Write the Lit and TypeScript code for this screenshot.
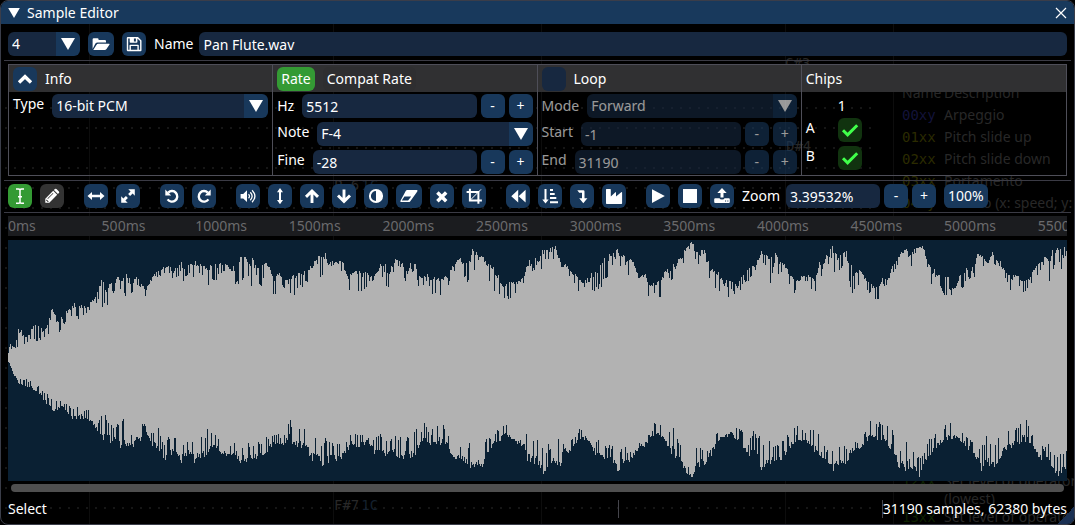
import { LitElement, html, css, svg } from "lit";
import { customElement, state } from "lit/decorators.js";

/* Envelope keyframes: [position, crest, notch]. Positions use SX units per column, levels use SY units per pixel. */
const SX = 2.904;
const SY = 3;
const SPLIT = 1553.5;
type Key = [number, number, number];
const shift = (keys: Key[]): Key[] => keys.map(([x, a, b]) => [x + SPLIT, a, b]);

const UPPER: Key[] = [
  [24, 350, 370], [27, 325, 345], [40, 335, 345], [53, 273, 330], [75, 300, 330], [95, 272, 310], [110, 265, 320], [125, 285, 310],
  [150, 215, 310], [170, 250, 297], [190, 222, 262], [217, 200, 250], [230, 205, 258], [250, 212, 237], [270, 190, 212],
  [284, 165, 200], [293, 125, 215], [305, 150, 222], [320, 140, 185], [343, 122, 160], [360, 107, 190], [375, 125, 192], [400, 125, 150],
  [422, 165, 183], [440, 125, 150], [460, 105, 125], [485, 90, 110], [505, 100, 140], [523, 68, 115], [530, 85, 140], [545, 85, 115],
  [563, 73, 135], [583, 83, 120], [605, 85, 148], [630, 85, 130], [655, 80, 110], [670, 98, 150], [692, 58, 158], [710, 63, 120],
  [730, 58, 158], [745, 95, 115], [753, 78, 172], [775, 80, 110], [795, 125, 190], [810, 112, 135], [835, 135, 178], [860, 107, 178],
  [880, 110, 150], [900, 88, 130], [925, 58, 140], [942, 50, 105], [955, 80, 135], [975, 72, 100], [992, 75, 115], [1015, 115, 182],
  [1030, 95, 160], [1050, 108, 183], [1070, 112, 140], [1085, 125, 180], [1105, 82, 105], [1115, 80, 165], [1130, 105, 160],
  [1148, 68, 85], [1165, 80, 105], [1180, 105, 150], [1193, 77, 110], [1205, 85, 125], [1218, 115, 168], [1238, 115, 135],
  [1250, 130, 173], [1275, 115, 180], [1295, 120, 172], [1310, 95, 120], [1332, 62, 92], [1345, 75, 120], [1358, 70, 160],
  [1367, 42, 60], [1383, 42, 135], [1400, 65, 80], [1410, 68, 118], [1430, 95, 160], [1447, 100, 187], [1465, 150, 190],
  [1480, 135, 200], [1500, 130, 175], [1515, 130, 165], [1530, 88, 120], [1537, 72, 115], [1545, 90, 150],
  ...shift([
    [0, 65, 90], [10, 78, 95], [20, 40, 110], [30, 42, 70], [43, 36, 75], [62, 32, 90], [75, 85, 135], [95, 88, 118], [110, 110, 140],
    [120, 105, 175], [140, 135, 210], [150, 125, 195], [170, 105, 165], [185, 98, 163], [195, 70, 150], [210, 60, 140], [230, 42, 65],
    [240, 42, 118], [260, 60, 80], [265, 65, 140], [280, 65, 95], [300, 120, 150], [320, 115, 150], [328, 150, 187], [345, 140, 180],
    [362, 128, 190], [378, 105, 135], [405, 82, 142], [425, 60, 100], [437, 38, 60], [452, 15, 40], [458, 20, 95], [470, 50, 75],
    [488, 35, 135], [500, 70, 110], [515, 100, 162], [530, 105, 160], [545, 140, 185], [553, 135, 212], [570, 135, 160],
    [587, 145, 198], [605, 105, 140], [620, 88, 135], [640, 85, 110], [657, 47, 75], [675, 45, 100], [683, 62, 145], [695, 50, 80],
    [705, 68, 115], [725, 85, 115], [740, 115, 155], [748, 125, 178], [765, 125, 160], [790, 118, 140], [812, 130, 182],
    [825, 80, 110], [833, 90, 145], [845, 60, 80], [865, 28, 130], [880, 55, 130], [903, 38, 60], [907, 60, 147], [925, 110, 182],
    [945, 100, 130], [960, 130, 155], [978, 145, 190], [997, 140, 192], [1010, 125, 150], [1025, 130, 160], [1040, 85, 115],
    [1058, 55, 80], [1075, 35, 110], [1090, 50, 100], [1110, 35, 65], [1125, 27, 60], [1140, 80, 105], [1150, 100, 160],
    [1158, 90, 185], [1170, 115, 140], [1187, 120, 195], [1200, 125, 160], [1215, 155, 195], [1228, 130, 155], [1243, 95, 175],
    [1255, 98, 120], [1272, 95, 155], [1285, 48, 75], [1300, 62, 90], [1315, 82, 115], [1328, 47, 80], [1348, 70, 130],
    [1365, 100, 130], [1380, 120, 165], [1400, 120, 150], [1418, 140, 182], [1440, 115, 150], [1460, 80, 115], [1475, 70, 95],
    [1495, 38, 145], [1515, 32, 75], [1525, 35, 80], [1532, 55, 145], [1537, 30, 50], [1546, 28, 115],
  ]),
];

const LOWER: Key[] = [
  [24, -130, -133], [30, -105, -115], [55, -60, -80], [90, -50, -75], [115, -30, -55], [150, 25, -20], [180, 5, -10], [215, 50, 5],
  [235, 40, 5], [262, 50, 20], [285, 85, 50], [293, 125, 22], [303, 100, 15], [312, 120, 35], [330, 105, 65], [345, 137, 50],
  [362, 130, 30], [380, 130, 90], [400, 118, 50], [420, 90, 55], [440, 125, 75], [460, 135, 70], [475, 165, 120], [495, 165, 75],
  [510, 150, 100], [525, 185, 82], [535, 160, 120], [553, 155, 90], [565, 178, 110], [585, 165, 88], [610, 158, 65], [625, 125, 85],
  [640, 155, 115], [665, 150, 120], [683, 155, 98], [695, 175, 140], [712, 175, 100], [730, 165, 130], [742, 165, 100],
  [760, 150, 115], [775, 150, 90], [800, 115, 82], [820, 125, 95], [840, 100, 42], [850, 120, 65], [870, 135, 62], [885, 130, 75],
  [905, 180, 88], [920, 160, 105], [930, 180, 110], [945, 187, 88], [960, 165, 115], [980, 178, 110], [1000, 150, 110],
  [1020, 125, 78], [1045, 130, 85], [1067, 110, 65], [1085, 150, 98], [1103, 140, 85], [1120, 165, 105], [1140, 145, 98],
  [1160, 180, 95], [1180, 160, 95], [1203, 165, 75], [1220, 125, 80], [1232, 105, 55], [1250, 130, 85], [1260, 120, 55],
  [1280, 120, 50], [1300, 130, 80], [1315, 160, 150], [1335, 165, 115], [1355, 178, 115], [1370, 197, 115], [1385, 190, 130],
  [1402, 190, 110], [1420, 135, 95], [1450, 110, 70], [1467, 92, 52], [1485, 115, 70], [1505, 120, 80], [1520, 130, 62],
  [1530, 170, 75], [1548, 178, 105],
  ...shift([
    [5, 175, 105], [25, 218, 135], [42, 210, 115], [55, 175, 130], [70, 200, 95], [85, 135, 115], [97, 155, 110], [115, 125, 95],
    [135, 105, 62], [155, 110, 72], [172, 150, 98], [195, 160, 115], [215, 185, 115], [230, 180, 125], [240, 205, 150],
    [258, 175, 120], [275, 175, 145], [292, 145, 75], [300, 130, 115], [320, 125, 62], [342, 95, 40], [355, 90, 60], [378, 120, 55],
    [408, 165, 78], [425, 180, 120], [440, 210, 180], [457, 222, 195], [468, 180, 130], [480, 190, 113], [495, 180, 150],
    [510, 155, 92], [530, 115, 82], [545, 100, 55], [567, 95, 45], [585, 105, 70], [597, 120, 72], [618, 155, 115], [630, 150, 80],
    [640, 150, 85], [657, 210, 95], [668, 180, 110], [677, 205, 98], [690, 160, 125], [705, 195, 108], [722, 155, 98],
    [740, 130, 85], [755, 110, 57], [770, 120, 65], [785, 110, 82], [800, 125, 75], [818, 155, 80], [835, 165, 115], [855, 185, 145],
    [870, 205, 118], [890, 180, 120], [905, 180, 120], [920, 140, 100], [945, 130, 110], [975, 95, 38], [985, 100, 60],
    [1003, 110, 47], [1020, 120, 60], [1040, 160, 80], [1055, 190, 125], [1070, 200, 115], [1087, 205, 98], [1100, 185, 150],
    [1112, 225, 155], [1125, 195, 140], [1145, 170, 95], [1165, 130, 85], [1185, 110, 70], [1200, 105, 50], [1222, 100, 62],
    [1240, 120, 70], [1262, 140, 98], [1280, 165, 120], [1295, 200, 130], [1312, 180, 90], [1330, 195, 115], [1347, 165, 98],
    [1367, 140, 82], [1395, 125, 62], [1425, 110, 32], [1440, 125, 85], [1460, 160, 115], [1480, 175, 130], [1488, 160, 110],
    [1502, 205, 150], [1522, 215, 150], [1537, 210, 125], [1546, 180, 150],
  ]),
];

const COLUMNS = 1059;
const WAVE_H = 241;

function noise(n: number): number {
  let h = Math.imul(n + 11, 0x9e3779b1);
  h = Math.imul(h ^ (h >>> 15), 0x85ebca6b);
  h = Math.imul(h ^ (h >>> 13), 0xc2b2ae35);
  return ((h ^ (h >>> 16)) >>> 0) / 4294967296;
}

function edge(keys: Key[], seed: number, origin: number): number[] {
  const out: number[] = [];
  let k = 0;
  for (let c = 0; c < COLUMNS; c++) {
    const u = (c + 8) * SX;
    while (k < keys.length - 2 && keys[k + 1][0] < u) k++;
    const [x0, a0, b0] = keys[k];
    const [x1, a1, b1] = keys[k + 1];
    const t = Math.min(1, Math.max(0, (u - x0) / (x1 - x0)));
    const crest = a0 + (a1 - a0) * t;
    const notch = b0 + (b1 - b0) * t;
    const r = noise(c * 2 + seed);
    const v = noise(c * 2 + seed + 1);
    const mix = r < 0.27 ? 0.75 + v * 0.3 : v * 0.4;
    out.push(Math.round((crest + (notch - crest) * mix) / SY + origin));
  }
  return out;
}

function wavePath(): string {
  const top = edge(UPPER, 3, -5);
  const bottom = edge(LOWER, 5003, 165);
  let d = `M0 ${top[0]}`;
  top.forEach((y, x) => (d += `V${y}H${x + 1}`));
  for (let x = COLUMNS - 1; x >= 0; x--) d += `V${bottom[x]}H${x}`;
  return d + "Z";
}
const WAVE = wavePath();

const ICONS: Record<string, unknown> = {
  open: svg`<path d="M3.6 17V7.4q0-1.2 1.2-1.2h3.6q1.2 0 1.2 1.2v.5h6.2q1.2 0 1.2 1.2v1.3H8.6q-1.4 0-2.2 1z"/><path d="M4.4 17.8l3-4.900q.7-1.200 2-1.200h10.600q1 0 .5.900l-3 4.500q-.7 1-1.900 1H5q-1 0-.6-.3z"/>`,
  save: svg`<path fill-rule="evenodd" d="M5.800 5h10.200l3.500 3.500v9.700q0 1-1 1H5.800q-1 0-1-1V6q0-1 1-1zM6.200 6.400v11.400h1.300v-4.300q0-.8.8-.8h7.700q.8 0 .8.800v4.300h1.300V9.100l-2.700-2.700v3.500q0 .8-.8.800H8.500q-.8 0-.8-.8V6.400zM8.900 14v3.800h6.500V14zM11.900 6.400v3h2V6.400z"/>`,
  up: svg`<path d="M6 15.500l6-5.800 6 5.800" fill="none" stroke="currentColor" stroke-width="3.400"/>`,
  ibeam: svg`<path d="M8 5h2.300q1.200 0 1.700 1 .5-1 1.700-1H16M8 19.300h2.300q1.200 0 1.700-1 .5 1 1.700 1H16M12 5.800v12.800M10 12.700h4" fill="none" stroke="currentColor" stroke-width="1.500"/>`,
  pencil: svg`<path fill-rule="evenodd" d="M5.300 18.700v-4l7.900-7.900 4 4-7.900 7.900zM6.600 15.600l-.3.400v1h1v1h.9l.5-.5zM13.900 6.100l1-1q.8-.8 1.600 0l2.400 2.400q.8.800 0 1.600l-1 1zM7.900 14.900l5.500-5.500-.5-.5-5.500 5.500z"/>`,
  horiz: svg`<path d="M3.500 12L8 8v2.800h8V8l4.500 4-4.500 4v-2.800H8V16z"/>`,
  diag: svg`<path d="M12.300 5.200h6.500v6.500l-2.200-2.200-2.500 2.500-2-2 2.500-2.500zM11.700 18.800H5.200v-6.500l2.200 2.200L9.900 12l2 2-2.500 2.500z"/>`,
  undo: svg`<path d="M8.200 8.600A5.300 5.300 0 1 1 7.600 15.400" fill="none" stroke="currentColor" stroke-width="2.400"/><path d="M5.300 5.500v5.900h5.900z"/>`,
  redo: svg`<path d="M15.800 8.600A5.300 5.300 0 1 0 16.400 15.400" fill="none" stroke="currentColor" stroke-width="2.400"/><path d="M18.700 5.500v5.900h-5.900z"/>`,
  volume: svg`<path d="M4.600 10h2.600L11 6.300v11.800l-3.800-3.700H4.600z"/><path d="M12.500 10.200q2 1.900 0 4M14.300 8.200q3.700 4 0 8M16.100 6.200q5.600 6 0 12" fill="none" stroke="currentColor" stroke-width="1.300"/>`,
  vert: svg`<path d="M12 4l3 4.200h-2v7.800h2L12 20.200 9 16h2V8.200H9z"/>`,
  arrowup: svg`<path d="M6 12.900l6-5.900 6 5.900M12 8v11" fill="none" stroke="currentColor" stroke-width="2.900"/>`,
  arrowdown: svg`<path d="M6 11.500l6 5.900 6-5.900M12 16.400V5.500" fill="none" stroke="currentColor" stroke-width="2.900"/>`,
  invert: svg`<circle cx="12" cy="12" r="6.100" fill="none" stroke="currentColor" stroke-width="2"/><path d="M12 6v12a6 6 0 0 0 0-12z"/>`,
  eraser: svg`<path fill-rule="evenodd" d="M10.300 6h9.200q1.600 0 .8 1.400l-7 9.800q-.6.900-1.700.9H4.300q-1.600 0-.8-1.400l5.200-9.800Q9.200 6 10.300 6zM7.400 12.500l-2.600 4h6.300l3.100-4z"/>`,
  cross: svg`<path d="M7.400 8.400l8.800 8.800M16.200 8.400l-8.800 8.800" fill="none" stroke="currentColor" stroke-width="3.500"/>`,
  crop: svg`<path d="M7.900 4.800v11.700h12M4.600 8h11.800v11.800" fill="none" stroke="currentColor" stroke-width="2"/><path d="M8 16.400L19 5.400" fill="none" stroke="currentColor" stroke-width="1"/>`,
  rewind: svg`<path d="M12.200 5.800v12.800L5.300 12.200zM19.600 5.800v12.800l-7-6.400z"/>`,
  sort: svg`<path d="M6.500 5h2v10.500h2.200L7.500 19.600l-3.200-4.100h2.200zM12 5h3v2h-3zM12 9h4.700v2H12zM12 13h6.300v2H12zM12 17.200h8v2h-8z"/>`,
  level: svg`<path d="M7.300 6.200h6q1.200 0 1.200 1.200v6.800h2.900l-4.100 5-4.100-5H12V8.700H9.200z"/>`,
  industry: svg`<path d="M4.600 5h3.600q.6 0 .6.600v7l4.600-4.300q.6-.5.600.3v3.900l5.200-4.300q.9-.6.900.4v10.700q0 .7-.7.700H4.700q-.7 0-.7-.7V5.600q0-.6.600-.6z"/>`,
  play: svg`<path d="M6 5.200v13.800L18.800 12z"/>`,
  stop: svg`<path d="M5 5h14v14H5z"/>`,
  upload: svg`<path d="M12 4l4.700 5h-3.200v4.400h-3V9H7.300z"/><path fill-rule="evenodd" d="M5.200 14.300h4.300q.3 1.200 2.500 1.200t2.500-1.200h4.300q1 0 1 1V18q0 1-1 1H5.200q-1 0-1-1v-2.700q0-1 1-1zM15 16.500v1.100h1.100v-1.100zM17.300 16.500v1.100h1.100v-1.100z"/>`,
  check: svg`<path d="M5 12.300l4.600 4.600L19.200 7.300" fill="none" stroke="currentColor" stroke-width="3"/>`,
};

const icon = (name: string) => html`<svg class="ico" viewBox="0 0 24 24" aria-hidden="true">${ICONS[name]}</svg>`;

const TOOLS: { icon: string; label: string; mode?: string; wide?: boolean }[][] = [
  [{ icon: "ibeam", label: "Select mode", mode: "on" }, { icon: "pencil", label: "Draw mode", mode: "off" }],
  [{ icon: "horiz", label: "Resize" }, { icon: "diag", label: "Resample" }],
  [{ icon: "undo", label: "Undo" }, { icon: "redo", label: "Redo" }],
  [
    { icon: "volume", label: "Amplify" }, { icon: "vert", label: "Normalize" }, { icon: "arrowup", label: "Fade in" },
    { icon: "arrowdown", label: "Fade out" }, { icon: "invert", label: "Invert" }, { icon: "eraser", label: "Silence", wide: true },
    { icon: "cross", label: "Delete" }, { icon: "crop", label: "Trim" },
  ],
  [
    { icon: "rewind", label: "Reverse" }, { icon: "sort", label: "Sort" }, { icon: "level", label: "Level" },
    { icon: "industry", label: "Filter" },
  ],
  [{ icon: "play", label: "Preview" }, { icon: "stop", label: "Stop" }, { icon: "upload", label: "Export" }],
];

const MARKS = Array.from({ length: 12 }, (_, i) => `${i * 500}ms`);

@customElement("app-root")
export class AppRoot extends LitElement {
  @state() private chips = [true, true];

  static styles = css`
    :host {
      display: block;
      background: #000;
      color: #fff;
      font: 14px/20px "Noto Sans", "Open Sans", sans-serif;
    }
    * { box-sizing: border-box; }
    .window {
      position: relative;
      display: flex;
      flex-direction: column;
      min-height: 100vh;
      border: 1px solid #3a3d49;
      border-radius: 8px;
      overflow: hidden;
      background: #000;
    }
    .title {
      display: flex;
      align-items: center;
      gap: 7px;
      height: 23px;
      padding: 0 7px;
      background: #18395c;
      z-index: 1;
    }
    .title h1 { flex: 1; margin: 0; font: inherit; }
    .tri { display: block; width: 12px; height: 10px; fill: currentColor; }
    button, input, select { font: inherit; color: inherit; border: 0; margin: 0; outline-offset: 1px; }
    .title button { display: flex; padding: 0; background: none; }
    .close { width: 12px; height: 12px; stroke: #fff; stroke-width: 1.2; }
    .content {
      position: relative;
      flex: 1;
      display: flex;
      flex-direction: column;
      gap: 4px;
      padding: 8px 7px 4px;
    }
    .row { display: flex; align-items: center; gap: 8px; }
    .rule { height: 1px; margin: 0 -4px -1px; border: 0; background: #3b3b45; flex: none; }
    input.text {
      flex: 1;
      min-width: 0;
      width: 0;
      height: 24px;
      padding: 0 4px;
      border-radius: 6px;
      background: #172840;
    }
    .combo { position: relative; display: flex; flex: 1; min-width: 0; height: 24px; }
    .combo select {
      appearance: none;
      width: 100%;
      padding: 0 28px 0 4px;
      border-radius: 6px;
      opacity: 1;
      background: linear-gradient(to left, #18385b 24px, #172840 24px);
    }
    .combo .tri { position: absolute; right: 5px; top: 6px; width: 14px; height: 12px; pointer-events: none; }
    .combo.small { flex: 0 0 72px; }
    .btn {
      display: flex;
      align-items: center;
      justify-content: center;
      flex: none;
      width: 24px;
      height: 24px;
      padding: 0;
      border-radius: 6px;
      background: #18385b;
    }
    .btn.wide { width: 26px; }
    .btn.fit { width: auto; padding: 0 4px; }
    .btn.on { background: #349a34; }
    .btn.off { background: #333; }
    .btn.flat { background: #2e2e30; }
    .ico { width: 24px; height: 24px; fill: currentColor; flex: none; }
    .props {
      display: grid;
      grid-template-columns: repeat(4, minmax(0, 1fr));
      border: 1px solid #4e4e58;
    }
    .col:not(:last-child) { border-right: 1px solid #4e4e58; }
    .head {
      display: flex;
      align-items: center;
      gap: 8px;
      height: 27px;
      padding: 0 4px;
      background: #303032;
    }
    .body { display: flex; flex-direction: column; align-items: stretch; gap: 4px; padding: 2px 4px 1px; }
    .field { display: flex; align-items: center; gap: 4px; height: 24px; }
    .field label { margin-right: 4px; }
    .field.up label { padding-bottom: 4px; }
    .dim { opacity: 0.6; }
    .tick {
      appearance: none;
      width: 24px;
      height: 24px;
      border-radius: 6px;
      background: #172840;
    }
    .chips { align-self: flex-start; border-collapse: collapse; margin: 0; }
    .chips th { font-weight: normal; text-align: left; padding: 0; }
    .chips tbody th { width: 32px; vertical-align: top; }
    .chips thead th { height: 24px; }
    .chips td { padding: 0; vertical-align: top; }
    .chips tbody tr:not(:last-child) td { padding-bottom: 4px; }
    .chips td label { display: grid; width: 24px; height: 24px; color: #40ff4a; }
    .chips td input, .chips td svg { grid-area: 1 / 1; }
    .chips td input { background: #11330f; }
    .chips td svg { visibility: hidden; pointer-events: none; }
    .chips td input:checked + svg { visibility: visible; }
    .tools { gap: 20px; }
    .group { display: flex; align-items: center; gap: 8px; }
    .zoom { display: flex; align-items: center; gap: 4px; margin-left: -12px; }
    .zoom label { margin-right: 2px; }
    .row > label { margin-right: -2px; }
    .zoom input.text { flex: 0 0 94px; }
    .zoom .fit { margin-left: 4px; }
    .ruler {
      display: flex;
      height: 20px;
      overflow: hidden;
      background: #1b1c1f;
      color: #6a6a6c;
      white-space: nowrap;
    }
    .ruler span { flex: 0 0 8.84%; width: 0; }
    .wave {
      flex: 1 1 0;
      min-height: 160px;
      width: 100%;
      display: block;
      background: #0a2033;
    }
    .scroll { height: 8px; margin: -1px 3px 0; border-radius: 4px; background: #4f4f4f; }
    .status { display: flex; height: 24px; align-items: center; padding-top: 2px; }
    .status span { flex: 611 0 0; min-height: 18px; line-height: 18px; }
    .status span + span { flex-grow: 263; border-left: 1px solid #45454c; }
    .status span:last-child { flex: 0 0 auto; border-left: 1px solid #45454c; white-space: nowrap; }
    .grip {
      position: absolute;
      right: 0;
      bottom: 0;
      width: 17px;
      height: 17px;
      background: linear-gradient(135deg, transparent 50%, #1a3053 50%);
    }
    .ghost { position: absolute; inset: 0; overflow: hidden; pointer-events: none; color: #282828; white-space: nowrap; }
    .dots {
      position: absolute;
      left: 0;
      top: 99px;
      width: 872px;
      bottom: 0;
      background: radial-gradient(circle at 5px 8px, #161616 1px, transparent 1px) 0 0 / 9px 20px;
    }
    .bar { position: absolute; top: 0; bottom: 0; width: 1px; background: #0d0d0d; }
    .b1 { left: 88px; } .b2 { left: 332px; } .b3 { left: 540px; } .b4 { left: 784px; } .b5 { left: 892px; }
    .note { position: absolute; font-family: "DejaVu Sans Mono", monospace; }
    .n1 { left: 784px; top: 52px; } .n2 { left: 785px; top: 135px; }
    .n3 { left: 333px; top: 174px; } .n4 { left: 333px; top: 494px; }
    .note i { font-style: normal; color: #14202e; margin-left: 2px; }
    .fx { position: absolute; left: 901px; display: grid; grid-template-columns: 42px auto; line-height: 22px; }
    .fx.a { top: 81px; } .fx.b { top: 471px; line-height: 18px; }
    .fx code { font: 14px "DejaVu Sans Mono", monospace; line-height: inherit; color: #2b2b00; }
    .fx code.v { color: #13133a; }
    .fx code.g { color: #0e2200; }
    .content > :not(.ghost) { position: relative; }
  `;

  private tri() {
    return html`<svg class="tri" viewBox="0 0 14 12" aria-hidden="true"><path d="M0 0h14L7 12z" /></svg>`;
  }

  private number(id: string, label: string, value: string, disabled = false, up = true) {
    return html`<div class="field ${up ? "up" : ""}">
      <label for=${id}>${label}</label>
      <input class="text" id=${id} type="text" .value=${value} ?disabled=${disabled} />
      <button class="btn" aria-label="Decrease ${label}" ?disabled=${disabled}>-</button>
      <button class="btn" aria-label="Increase ${label}" ?disabled=${disabled}>+</button>
    </div>`;
  }

  private choice(id: string, label: string, value: string, disabled = false, up = true) {
    return html`<div class="field ${up ? "up" : ""}">
      <label for=${id}>${label}</label>
      <span class="combo"><select id=${id} ?disabled=${disabled}><option>${value}</option></select>${this.tri()}</span>
    </div>`;
  }

  private toggle(i: number) {
    this.chips = this.chips.map((c, n) => (n === i ? !c : c));
  }

  render() {
    return html`<main class="window">
      <div class="ghost" aria-hidden="true">
        <div class="dots"></div>
        <div class="bar b1"></div><div class="bar b2"></div><div class="bar b3"></div><div class="bar b4"></div><div class="bar b5"></div>
        <span class="note n1">C#3</span><span class="note n2">D#4</span>
        <span class="note n3">P 6<i>1C</i></span><span class="note n4">F#7<i>1C</i></span>
        <div class="fx a">
          <span>Name</span><span>Description</span>
          <code class="v">00xy</code><span>Arpeggio</span>
          <code>01xx</code><span>Pitch slide up</span>
          <code>02xx</code><span>Pitch slide down</span>
          <code>03xx</code><span>Portamento</span>
          <code>04xy</code><span>Vibrato (x: speed; y: depth)</span>
        </div>
        <div class="fx b">
          <code class="g">12xx</code><span>Set level of operator 1</span>
          <span></span><span>(lowest)</span>
          <code class="g">13xx</code><span>Set level of operator 2</span>
        </div>
      </div>
      <header class="title">
        ${this.tri()}
        <h1>Sample Editor</h1>
        <button aria-label="Close"><svg class="close" viewBox="0 0 12 12"><path d="M1 1l10 10M11 1L1 11" /></svg></button>
      </header>
      <div class="content">
        <div class="row">
          <span class="combo small"><select aria-label="Sample"><option>4</option></select>${this.tri()}</span>
          <button class="btn wide" aria-label="Open">${icon("open")}</button>
          <button class="btn" aria-label="Save">${icon("save")}</button>
          <label for="name">Name</label>
          <input class="text" id="name" type="text" .value=${"Pan Flute.wav"} />
        </div>
        <hr class="rule" />
        <section class="props">
          <div class="col">
            <div class="head"><button class="btn" aria-label="Collapse">${icon("up")}</button>Info</div>
            <div class="body">${this.choice("type", "Type", "16-bit PCM")}</div>
          </div>
          <div class="col">
            <div class="head"><button class="btn fit on">Rate</button><button class="btn fit flat">Compat Rate</button></div>
            <div class="body">
              ${this.number("hz", "Hz", "5512", false, false)}
              ${this.choice("note", "Note", "F-4")}
              ${this.number("fine", "Fine", "-28")}
            </div>
          </div>
          <div class="col">
            <div class="head"><input class="tick" id="loop" type="checkbox" /><label for="loop">Loop</label></div>
            <div class="body dim">
              ${this.choice("mode", "Mode", "Forward", true, false)}
              ${this.number("start", "Start", "-1", true)}
              ${this.number("end", "End", "31190", true)}
            </div>
          </div>
          <div class="col">
            <div class="head">Chips</div>
            <div class="body">
              <table class="chips">
                <thead><tr><td></td><th scope="col">1</th></tr></thead>
                <tbody>
                  ${["A", "B"].map((n, i) => html`<tr>
                    <th scope="row">${n}</th>
                    <td><label><input class="tick" type="checkbox" aria-label="Chip 1 ${n}" .checked=${this.chips[i]}
                      @change=${() => this.toggle(i)} />${icon("check")}</label></td>
                  </tr>`)}
                </tbody>
              </table>
            </div>
          </div>
        </section>
        <hr class="rule" />
        <div class="row tools">
          ${TOOLS.map((g) => html`<div class="group">
            ${g.map((t) => html`<button class="btn ${t.mode ?? ""} ${t.wide ? "wide" : ""}" aria-label=${t.label}>${icon(t.icon)}</button>`)}
          </div>`)}
          <div class="zoom">
            <label for="zoom">Zoom</label>
            <input class="text" id="zoom" type="text" .value=${"3.39532%"} />
            <button class="btn" aria-label="Zoom out">-</button>
            <button class="btn" aria-label="Zoom in">+</button>
            <button class="btn fit">100%</button>
          </div>
        </div>
        <hr class="rule" />
        <div class="ruler">${MARKS.map((m) => html`<span>${m}</span>`)}</div>
        <svg class="wave" viewBox="0 0 ${COLUMNS} ${WAVE_H}" preserveAspectRatio="none" role="img" aria-label="Waveform">
          <path d=${WAVE} fill="#b2b2b2" shape-rendering="crispEdges" />
        </svg>
        <div class="scroll"></div>
        <footer class="status"><span>Select</span><span></span><span>31190 samples, 62380 bytes</span></footer>
      </div>
      <div class="grip"></div>
    </main>`;
  }
}
